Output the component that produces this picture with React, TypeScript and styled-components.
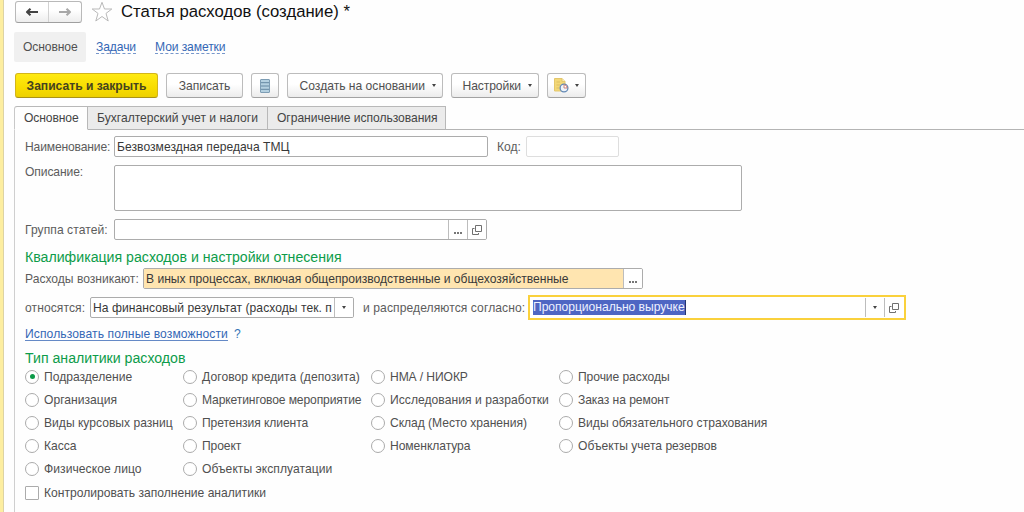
import React from 'react';
import styled, { createGlobalStyle, css } from 'styled-components';

const Global = createGlobalStyle`
  * { box-sizing: border-box; }
  html, body { margin: 0; padding: 0; background: #fff; overflow: hidden; }
  body { font-family: "Liberation Sans", Arial, sans-serif; font-size: 12.1px; color: #505050; }
`;

const Page = styled.div`
  display: flex;
  width: 1024px;
  height: 512px;
  overflow: hidden;
  background: #fefefe;
`;
const Strip = styled.div`
  flex: none;
  width: 4px;
  background: #fdeea0;
  border-right: 1px solid #ddd3a4;
`;
const Main = styled.main`
  flex: 1;
  min-width: 0;
  padding: 1px 0 0 10px;
  display: flex;
  flex-direction: column;
`;
const Label = styled.span<{ $ls?: number }>`
  white-space: nowrap;
  letter-spacing: ${(p) => p.$ls ?? 0}px;
`;

const TitleRow = styled.header`
  display: flex;
  align-items: center;
  height: 22px;
  padding-left: 1px;
`;
const History = styled.div`
  display: flex;
  width: 67px;
  height: 22px;
  margin-right: 9px;
  border: 1px solid #b9b9b9;
  border-bottom-color: #9f9f9f;
  border-radius: 3px;
  background: linear-gradient(#fff 40%, #ededed);
`;
const HistoryButton = styled.button`
  flex: 1;
  display: flex;
  align-items: center;
  justify-content: center;
  padding: 0;
  border: 0;
  background: none;
  & + & { border-left: 1px solid #d2d2d2; }
`;
const Title = styled.h1`
  margin: 0 0 0 8px;
  font-size: 16.7px;
  font-weight: 400;
  line-height: 22px;
  color: #111;
  white-space: nowrap;
`;

const Nav = styled.nav`
  display: flex;
  align-items: center;
  height: 30px;
  margin-top: 9px;
`;
const NavCurrent = styled.div`
  display: flex;
  align-items: center;
  width: 72px;
  height: 30px;
  padding-left: 9px;
  border-radius: 2px;
  background: #f0f0f0;
`;
const NavLink = styled.a<{ $gap: number }>`
  margin-left: ${(p) => p.$gap}px;
  color: #3467b5;
  white-space: nowrap;
  letter-spacing: -0.1px;
  text-decoration: underline dashed #7797cb 1px;
  text-underline-offset: 2px;
  text-decoration-skip-ink: none;
`;

const Toolbar = styled.div`
  display: flex;
  gap: 8px;
  height: 25px;
  margin-top: 11px;
  padding-left: 1px;
`;
const ToolButton = styled.button<{ $width: number; $primary?: boolean; $menu?: boolean }>`
  display: flex;
  align-items: center;
  justify-content: ${(p) => (p.$menu ? 'flex-end' : 'center')};
  width: ${(p) => p.$width}px;
  height: 25px;
  padding: 0 ${(p) => (p.$menu ? 6 : 0)}px 0 0;
  border: 1px solid #bcbcbc;
  border-bottom-color: #a2a2a2;
  border-radius: 3px;
  background: linear-gradient(#fff 45%, #ececec);
  font: inherit;
  color: #505050;
  ${(p) =>
    p.$primary &&
    css`
      border-color: #d3b51a;
      border-bottom-color: #a99219;
      background: linear-gradient(#ffea12, #f8dc00 60%, #edd000);
      font-weight: 700;
      color: #45431f;
    `}
`;
const Caret = styled.i<{ $gap?: number }>`
  width: 0;
  height: 0;
  margin-left: ${(p) => p.$gap ?? 0}px;
  border: 2.5px solid transparent;
  border-top: 3px solid #444;
  border-bottom: 0;
`;

const Tabs = styled.div`
  display: flex;
  height: 24px;
  margin-top: 8px;
`;
const Tab = styled.div<{ $width: number; $active?: boolean }>`
  display: flex;
  align-items: center;
  width: ${(p) => p.$width}px;
  padding-left: 9px;
  border-top: 1px solid #b8b8b8;
  border-right: 1px solid #b8b8b8;
  border-bottom: 1px solid ${(p) => (p.$active ? '#fefefe' : '#b4b4b4')};
  background: ${(p) => (p.$active ? '#fefefe' : '#ebebeb')};
  color: #444;
  &:first-child { border-left: 1px solid #c8c8c8; border-top-left-radius: 3px; }
`;
const TabsRest = styled.div`
  flex: 1;
  border-bottom: 1px solid #b4b4b4;
`;
const Panel = styled.section`
  flex: 1;
  padding: 6px 0 0 10px;
  border-left: 1px solid #cfcfcf;
`;

const Row = styled.div<{ $height: number; $gap: number; $top?: boolean }>`
  display: flex;
  align-items: ${(p) => (p.$top ? 'flex-start' : 'center')};
  height: ${(p) => p.$height}px;
  margin-bottom: ${(p) => p.$gap}px;
`;
const FieldLabel = styled.label<{ $width: number; $indent?: number; $ls?: number }>`
  flex: none;
  width: ${(p) => p.$width}px;
  padding-left: ${(p) => p.$indent ?? 0}px;
  line-height: 14px;
  white-space: nowrap;
  letter-spacing: ${(p) => p.$ls ?? 0}px;
  color: #5c5c5c;
`;
const Field = styled.div<{ $width: number; $height?: number; $tone?: 'light' }>`
  display: flex;
  flex: none;
  width: ${(p) => p.$width}px;
  height: ${(p) => p.$height ?? 21}px;
  border: 1px solid ${(p) => (p.$tone === 'light' ? '#dedede' : '#acacac')};
  border-radius: 2px;
  background: #fff;
  color: #383838;
  overflow: hidden;
`;
const Value = styled.div<{ $amber?: boolean }>`
  flex: 1;
  display: flex;
  align-items: center;
  min-width: 0;
  padding-left: 2px;
  background: ${(p) => (p.$amber ? '#ffe5b0' : 'transparent')};
`;
const FieldButton = styled.button`
  flex: none;
  display: flex;
  align-items: center;
  justify-content: center;
  width: 19px;
  padding: 0;
  border: 0;
  border-left: 1px solid #bdbdbd;
  background: #fff;
`;
const Dots = styled.span`
  display: flex;
  gap: 1px;
  padding-top: 6px;
  &::before, &::after, & > i {
    content: "";
    width: 2px;
    height: 2px;
    background: #777;
  }
`;
const Focused = styled.div`
  display: flex;
  flex: none;
  width: 378px;
  height: 25px;
  padding: 1px 1px 1px 1px;
  border: 2px solid #fad13c;
  background: #fff;
`;
const Selected = styled.span`
  height: 15px;
  line-height: 15px;
  background: #4e66c3;
  border-right: 1px solid #25356f;
  color: #eef1ff;
  white-space: nowrap;
  letter-spacing: -0.03px;
`;
const SectionTitle = styled.h2<{ $height: number }>`
  margin: 0;
  height: ${(p) => p.$height}px;
  font-size: 14.15px;
  font-weight: 400;
  line-height: 18px;
  color: #0d9c4a;
  white-space: nowrap;
`;
const FullLink = styled.a`
  color: #3467b5;
  white-space: nowrap;
  letter-spacing: 0.1px;
  text-decoration: underline #6489c6 1px;
  text-underline-offset: 2px;
  text-decoration-skip-ink: none;
`;
const Help = styled.span`
  margin-left: 6px;
  color: #3474b5;
`;

const Options = styled.div`
  display: grid;
  grid-template-columns: 158px 188px 188px 240px;
  grid-auto-rows: 23.2px;
`;
const Option = styled.label<{ $col: number; $row: number }>`
  grid-column: ${(p) => p.$col};
  grid-row: ${(p) => p.$row};
  display: flex;
  align-items: center;
  gap: 5px;
`;
const Mark = styled.span<{ $square?: boolean }>`
  flex: none;
  display: flex;
  align-items: center;
  justify-content: center;
  width: 14px;
  height: 14px;
  border: 1px solid #ababab;
  border-radius: ${(p) => (p.$square ? '1px' : '50%')};
  background: #fff;
`;
const Dot = styled.i`
  width: 5px;
  height: 5px;
  border-radius: 50%;
  background: #0c9a48;
`;

const Arrow = ({ right }: { right?: boolean }) => (
  <svg width="14" height="10" viewBox="0 0 14 10" fill="none" stroke={right ? '#a8a8a8' : '#444'} strokeWidth="2.1" strokeLinejoin="round">
    <path d={right ? 'M1 5H12M8.5 1.8L12 5L8.5 8.2' : 'M13 5H2M5.5 1.8L2 5L5.5 8.2'} />
  </svg>
);
const Star = () => (
  <svg width="22" height="22" viewBox="0 0 22 22" fill="#fff" stroke="#b9b9b9" strokeWidth="1">
    <path d="M11 1.3L13.5 8H20.8L15 12.4L17.2 20L11 15.5L4.8 20L7 12.4L1.2 8H8.5Z" />
  </svg>
);
const ListIcon = () => (
  <svg width="10" height="14" viewBox="0 0 10 14">
    <rect x="0.5" y="0.5" width="9" height="13" rx="0.5" fill="#b4d0e0" stroke="#7d9db4" />
    <path d="M1 3.7H9M1 7H9M1 10.3H9" stroke="#6488a2" />
  </svg>
);
const ReportIcon = () => (
  <svg width="15" height="15" viewBox="0 0 15 15">
    <path d="M.5 .5H8L11 3.5V13H.5Z" fill="#f3d878" stroke="#e3c76c" />
    <path d="M8 .5V3.5H11" fill="#fbedb8" stroke="#dcc06a" strokeWidth=".8" />
    <path d="M2.5 4H6M2.5 7H6M2.5 10H5" stroke="#dcbf62" />
    <circle cx="10" cy="10" r="3.9" fill="#eef4fa" stroke="#6389b5" strokeWidth="1.3" />
    <path d="M10 10V6.8A3.2 3.2 0 0 1 13.2 10Z" fill="#fff" stroke="#c46a62" strokeWidth=".8" />
  </svg>
);
const OpenIcon = () => (
  <svg width="10" height="10" viewBox="0 0 10 10" fill="none" stroke="#707070">
    <path d="M3.5 .5H9.5V6.5H3.5ZM2.5 3.5H.5V9.5H6.5V8" />
  </svg>
);
const More = () => (
  <FieldButton><Dots><i /></Dots></FieldButton>
);

const options: [string, number, number, number?][] = [
  ['Подразделение', 1, 1],
  ['Организация', 1, 2],
  ['Виды курсовых разниц', 1, 3],
  ['Касса', 1, 4],
  ['Физическое лицо', 1, 5, 0.05],
  ['Договор кредита (депозита)', 2, 1, 0.06],
  ['Маркетинговое мероприятие', 2, 2, -0.12],
  ['Претензия клиента', 2, 3, -0.08],
  ['Проект', 2, 4, -0.1],
  ['Объекты эксплуатации', 2, 5, 0.04],
  ['НМА / НИОКР', 3, 1, -0.1],
  ['Исследования и разработки', 3, 2, 0.04],
  ['Склад (Место хранения)', 3, 3, -0.04],
  ['Номенклатура', 3, 4, -0.06],
  ['Прочие расходы', 4, 1, -0.08],
  ['Заказ на ремонт', 4, 2, -0.08],
  ['Виды обязательного страхования', 4, 3],
  ['Объекты учета резервов', 4, 4],
];

export default function App() {
  return (
    <Page>
      <Global />
      <Strip />
      <Main>
        <TitleRow>
          <History>
            <HistoryButton><Arrow /></HistoryButton>
            <HistoryButton><Arrow right /></HistoryButton>
          </History>
          <Star />
          <Title>Статья расходов (создание) *</Title>
        </TitleRow>
        <Nav>
          <NavCurrent><Label $ls={-0.1}>Основное</Label></NavCurrent>
          <NavLink $gap={10}>Задачи</NavLink>
          <NavLink $gap={19}>Мои заметки</NavLink>
        </Nav>
        <Toolbar>
          <ToolButton $width={143} $primary><Label>Записать и закрыть</Label></ToolButton>
          <ToolButton $width={77}><Label>Записать</Label></ToolButton>
          <ToolButton $width={28}><ListIcon /></ToolButton>
          <ToolButton $width={156} $menu><Label>Создать на основании</Label><Caret $gap={7} /></ToolButton>
          <ToolButton $width={88} $menu><Label $ls={-0.1}>Настройки</Label><Caret $gap={7} /></ToolButton>
          <ToolButton $width={39} $menu><ReportIcon /><Caret $gap={6} /></ToolButton>
        </Toolbar>
        <Tabs>
          <Tab $width={74} $active><Label $ls={-0.1}>Основное</Label></Tab>
          <Tab $width={180}><Label>Бухгалтерский учет и налоги</Label></Tab>
          <Tab $width={178}><Label $ls={-0.04}>Ограничение использования</Label></Tab>
          <TabsRest />
        </Tabs>
        <Panel>
          <Row $height={21} $gap={8}>
            <FieldLabel $width={89} $ls={-0.15}>Наименование:</FieldLabel>
            <Field $width={374}><Value><Label $ls={0.04}>Безвозмездная передача ТМЦ</Label></Value></Field>
            <FieldLabel $width={38} $indent={9}>Код:</FieldLabel>
            <Field $width={93} $tone="light" />
          </Row>
          <Row $height={46} $gap={8} $top>
            <FieldLabel $width={89} $ls={-0.1}>Описание:</FieldLabel>
            <Field $width={628} $height={46} />
          </Row>
          <Row $height={21} $gap={8}>
            <FieldLabel $width={89} $ls={0.06}>Группа статей:</FieldLabel>
            <Field $width={373}>
              <Value />
              <More />
              <FieldButton><OpenIcon /></FieldButton>
            </Field>
          </Row>
          <SectionTitle $height={20}>Квалификация расходов и настройки отнесения</SectionTitle>
          <Row $height={21} $gap={6}>
            <FieldLabel $width={118}>Расходы возникают:</FieldLabel>
            <Field $width={500}>
              <Value $amber><Label>В иных процессах, включая общепроизводственные и общехозяйственные</Label></Value>
              <More />
            </Field>
          </Row>
          <Row $height={25} $gap={7}>
            <FieldLabel $width={65} $ls={0.08}>относятся:</FieldLabel>
            <Field $width={264}>
              <Value><Label $ls={0.05}>На финансовый результат (расходы тек. п</Label></Value>
              <FieldButton><Caret /></FieldButton>
            </Field>
            <FieldLabel $width={174} $indent={9} $ls={0.08}>и распределяются согласно:</FieldLabel>
            <Focused>
              <Value><Selected>Пропорционально выручке</Selected></Value>
              <FieldButton><Caret /></FieldButton>
              <FieldButton><OpenIcon /></FieldButton>
            </Focused>
          </Row>
          <Row $height={14} $gap={8}>
            <FullLink>Использовать полные возможности</FullLink>
            <Help>?</Help>
          </Row>
          <SectionTitle $height={16}>Тип аналитики расходов</SectionTitle>
          <Options>
            {options.map(([text, col, row, ls]) => (
              <Option key={text} $col={col} $row={row}>
                <Mark>{text === 'Подразделение' && <Dot />}</Mark>
                <Label $ls={ls}>{text}</Label>
              </Option>
            ))}
            <Option $col={1} $row={6}>
              <Mark $square />
              <Label>Контролировать заполнение аналитики</Label>
            </Option>
          </Options>
        </Panel>
      </Main>
    </Page>
  );
}
